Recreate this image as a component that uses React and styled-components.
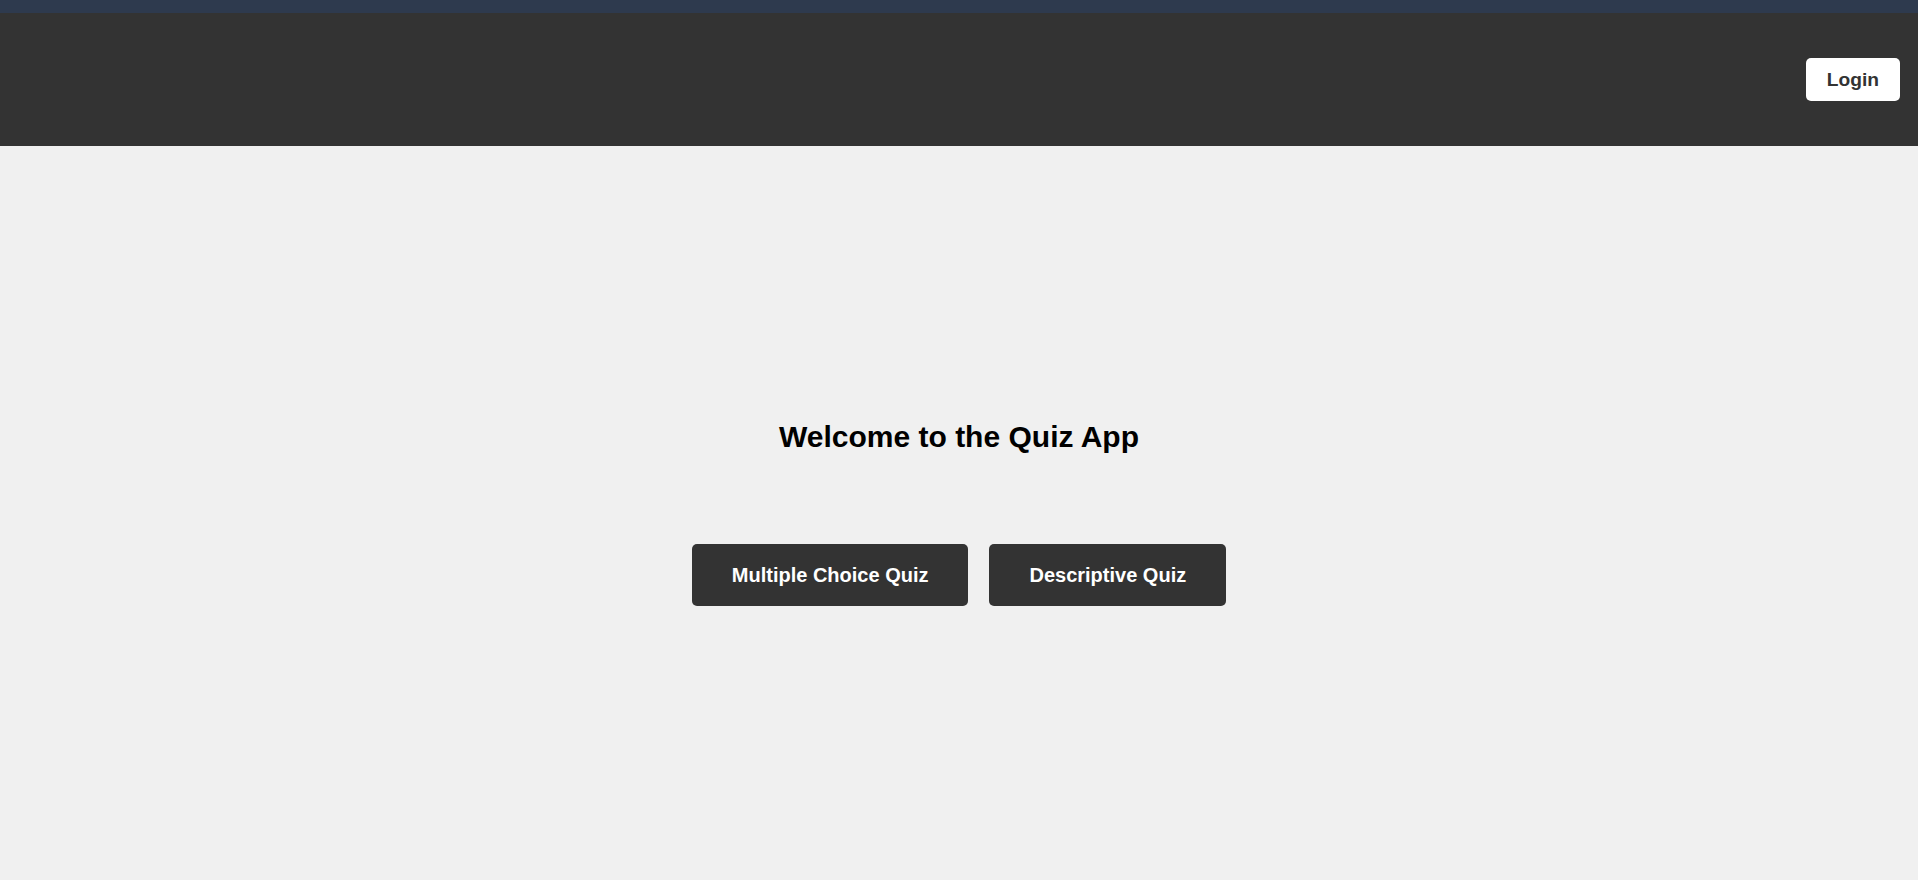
import React from 'react';
import styled, { createGlobalStyle } from 'styled-components';

const GlobalStyle = createGlobalStyle`
  html, body {
    margin: 0;
    padding: 0;
    background: #f0f0f0;
    font-family: "Liberation Sans", Arial, sans-serif;
  }
`;

const Page = styled.div`
  display: flex;
  flex-direction: column;
  min-height: 100vh;
`;

const TopStrip = styled.div`
  height: 13px;
  background: #2e3a4e;
`;

const Header = styled.header`
  display: flex;
  align-items: center;
  justify-content: flex-end;
  height: 133px;
  padding: 0 18px;
  background: #333;
`;

const LoginButton = styled.button`
  font-family: inherit;
  font-size: 19.2px;
  font-weight: bold;
  line-height: 23px;
  color: #333;
  background: #fff;
  border: none;
  border-radius: 5px;
  padding: 10px 21px;
  cursor: pointer;
`;

const Main = styled.main`
  flex: 1;
  display: flex;
  flex-direction: column;
  align-items: center;
  justify-content: center;
`;

const Title = styled.h2`
  margin: 0 0 90px;
  font-size: 30px;
  font-weight: bold;
  color: #000;
`;

const ButtonRow = styled.div`
  display: flex;
  gap: 21px;
`;

const QuizButton = styled.button`
  font-family: inherit;
  font-size: 20px;
  font-weight: bold;
  line-height: 22px;
  color: #fff;
  background: #333;
  border: none;
  border-radius: 5px;
  padding: 20px 40px;
  cursor: pointer;
`;

const App = () => (
  <Page>
    <GlobalStyle />
    <TopStrip />
    <Header>
      <LoginButton>Login</LoginButton>
    </Header>
    <Main>
      <Title>Welcome to the Quiz App</Title>
      <ButtonRow>
        <QuizButton>Multiple Choice Quiz</QuizButton>
        <QuizButton>Descriptive Quiz</QuizButton>
      </ButtonRow>
    </Main>
  </Page>
);

export default App;
